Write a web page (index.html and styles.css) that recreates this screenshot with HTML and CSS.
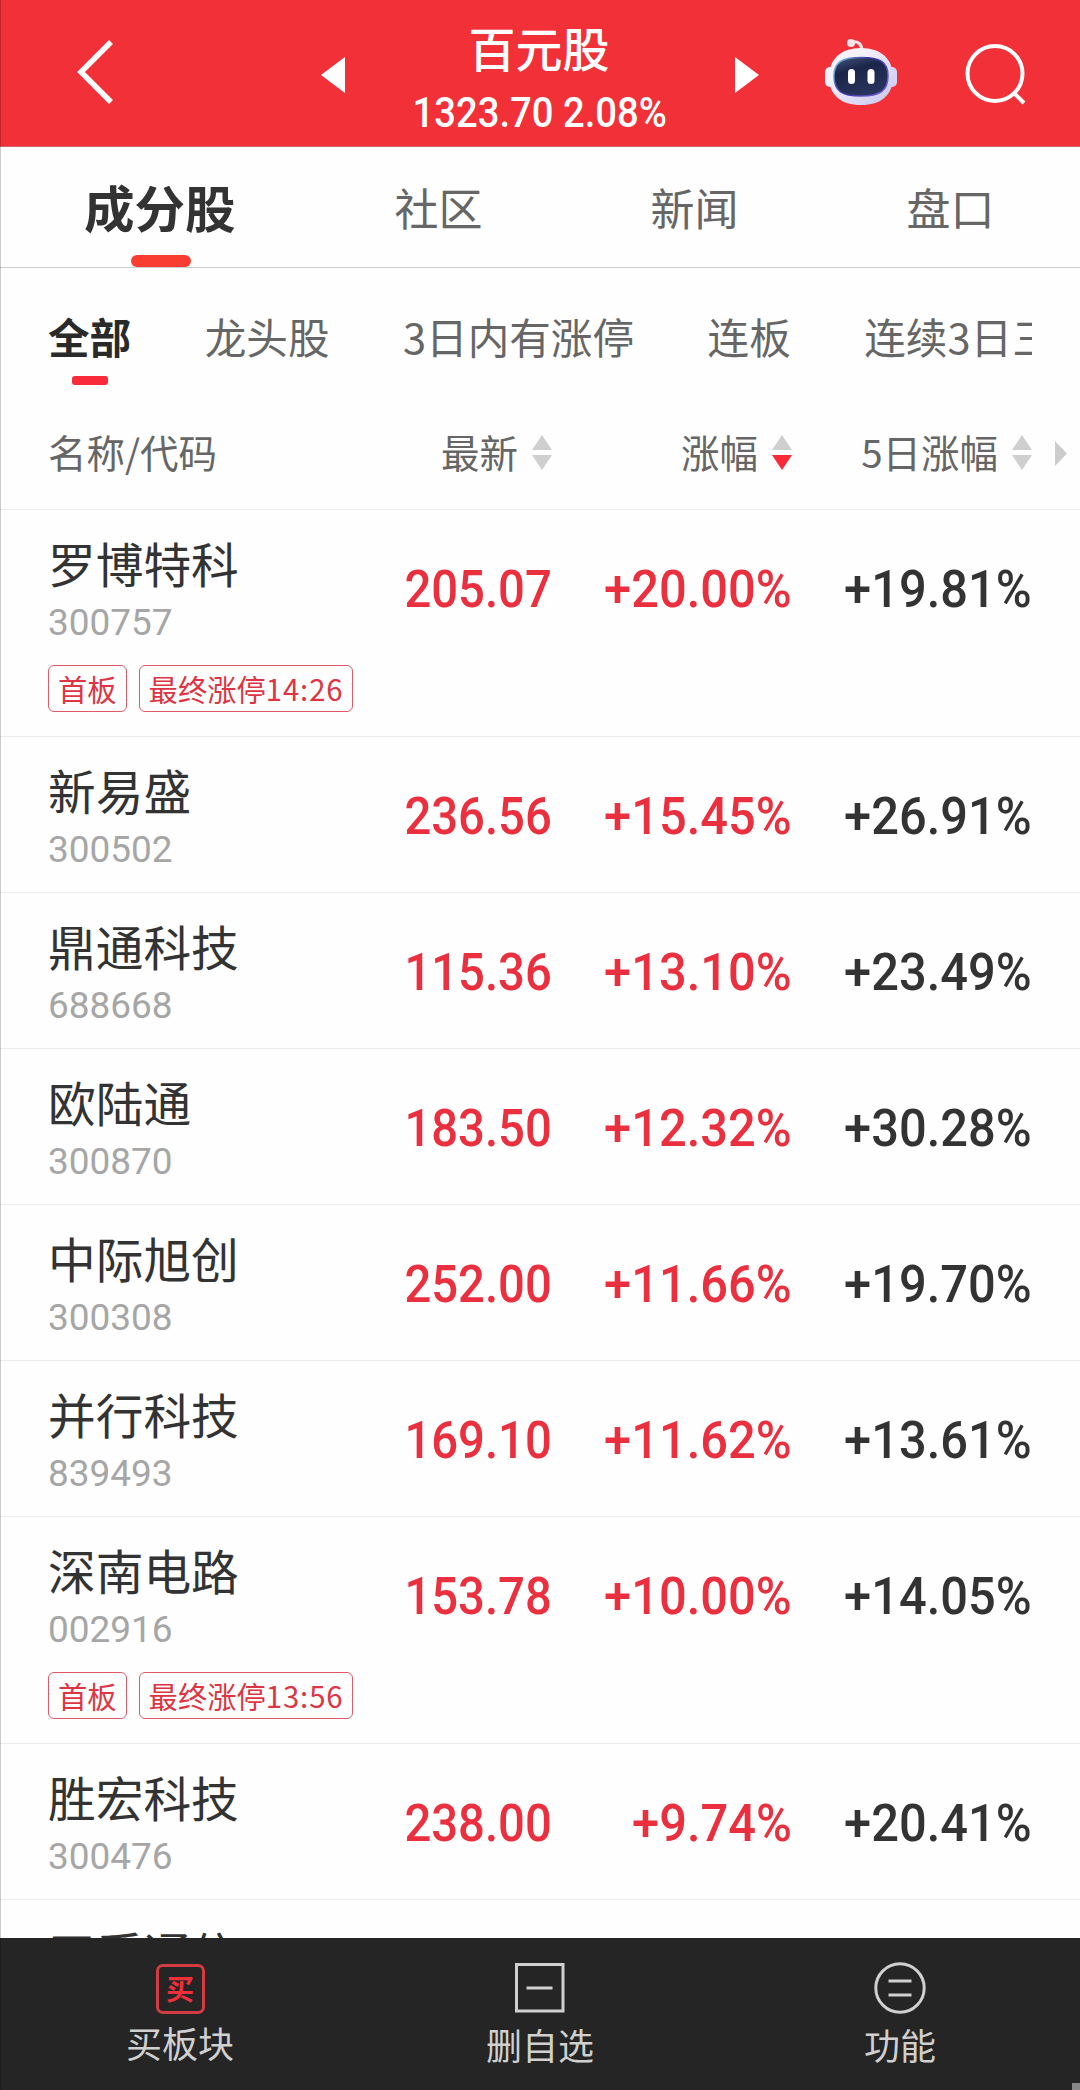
FILE: index.html
```html
<!DOCTYPE html>
<html lang="zh-CN">
<head>
    <meta charset="UTF-8">
    <meta name="viewport" content="width=device-width, initial-scale=1.0">
    <title>百元股</title>
    <link rel="stylesheet" href="styles.css">
</head>
<body>
    <header class="top-bar">
        <svg class="back" width="40" height="68" viewBox="0 0 40 68" fill="none" stroke="#fff" stroke-width="5.5"><path d="M36 4L6 34L36 64"/></svg>
        <svg class="prev" width="24" height="36" viewBox="0 0 24 36" fill="#fff"><path d="M0 18L24 0V36Z"/></svg>
        <div class="heading">
            <h1>百元股</h1>
            <p class="index"><span class="num">1323.70 2.08%</span></p>
        </div>
        <svg class="next" width="24" height="36" viewBox="0 0 24 36" fill="#fff"><path d="M24 18L0 0V36Z"/></svg>
        <svg class="robot" width="72" height="68" viewBox="0 0 72 68">
            <defs>
                <linearGradient id="shell" x1="0" y1="0" x2="1" y2="1">
                    <stop offset="0.3" stop-color="#f7f1f8"/>
                    <stop offset="1" stop-color="#c3c4f0"/>
                </linearGradient>
                <linearGradient id="rim" x1="0" y1="0" x2="1" y2="0.6">
                    <stop offset="0" stop-color="#7fd0e6"/>
                    <stop offset="0.5" stop-color="#3a2fa0"/>
                    <stop offset="1" stop-color="#6b58d0"/>
                </linearGradient>
                <linearGradient id="face" x1="0" y1="0" x2="0.4" y2="1">
                    <stop offset="0" stop-color="#46557a"/>
                    <stop offset="0.4" stop-color="#1a2548"/>
                    <stop offset="1" stop-color="#28335c"/>
                </linearGradient>
            </defs>
            <path d="M27 4C33 3 37 6 37 13" fill="none" stroke="#f8dfe6" stroke-width="3"/>
            <circle cx="26" cy="5" r="4" fill="#fbe3ea"/>
            <rect x="0" y="29" width="10" height="20" rx="5" fill="#f1f0fd"/>
            <rect x="62" y="29" width="10" height="20" rx="5" fill="#d3d3f5"/>
            <path d="M36 10C56 10 68 21 68 39C68 57 56 67 36 67C16 67 4 57 4 39C4 21 16 10 36 10Z" fill="url(#shell)"/>
            <path d="M36 19.500C55 19.500 63 24 63 38C63 53 55 58 36 58C17 58 9 53 9 38C9 24 17 19.500 36 19.500Z" fill="url(#face)" stroke="url(#rim)" stroke-width="1.500"/>
            <rect x="23" y="31" width="7" height="15" rx="3.500" fill="#fff"/>
            <rect x="42.500" y="31" width="7" height="15" rx="3.500" fill="#fff"/>
        </svg>
        <svg class="search" width="62" height="62" viewBox="0 0 62 62" fill="none" stroke="#fff" stroke-width="4"><circle cx="30" cy="30.500" r="27.500"/><path d="M49 50L59 60"/></svg>
    </header>

    <nav class="tabs">
        <span class="tab active">成分股</span>
        <span class="tab">社区</span>
        <span class="tab">新闻</span>
        <span class="tab">盘口</span>
    </nav>

    <div class="filters">
        <span class="filter active">全部</span>
        <span class="filter">龙头股</span>
        <span class="filter">3日内有涨停</span>
        <span class="filter">连板</span>
        <span class="filter">连续3日三</span>
    </div>

    <div class="columns">
        <span>名称/代码</span>
        <span class="sort">最新<i class="arrows"></i></span>
        <span class="sort">涨幅<i class="arrows down"></i></span>
        <span class="sort">5日涨幅<i class="arrows"></i></span>
        <i class="more"></i>
    </div>

    <main class="list">
        <div class="row">
            <div class="stock">
                <p class="name">罗博特科</p>
                <p class="code">300757</p>
                <div class="tags"><span class="tag">首板</span><span class="tag">最终涨停<b>14:26</b></span></div>
            </div>
            <span class="val red"><span class="num">205.07</span></span>
            <span class="val pct red"><span class="num">+20.00%</span></span>
            <span class="val pct"><span class="num">+19.81%</span></span>
        </div>
        <div class="row">
            <div class="stock">
                <p class="name">新易盛</p>
                <p class="code">300502</p>
            </div>
            <span class="val red"><span class="num">236.56</span></span>
            <span class="val pct red"><span class="num">+15.45%</span></span>
            <span class="val pct"><span class="num">+26.91%</span></span>
        </div>
        <div class="row">
            <div class="stock">
                <p class="name">鼎通科技</p>
                <p class="code">688668</p>
            </div>
            <span class="val red"><span class="num">115.36</span></span>
            <span class="val pct red"><span class="num">+13.10%</span></span>
            <span class="val pct"><span class="num">+23.49%</span></span>
        </div>
        <div class="row">
            <div class="stock">
                <p class="name">欧陆通</p>
                <p class="code">300870</p>
            </div>
            <span class="val red"><span class="num">183.50</span></span>
            <span class="val pct red"><span class="num">+12.32%</span></span>
            <span class="val pct"><span class="num">+30.28%</span></span>
        </div>
        <div class="row">
            <div class="stock">
                <p class="name">中际旭创</p>
                <p class="code">300308</p>
            </div>
            <span class="val red"><span class="num">252.00</span></span>
            <span class="val pct red"><span class="num">+11.66%</span></span>
            <span class="val pct"><span class="num">+19.70%</span></span>
        </div>
        <div class="row">
            <div class="stock">
                <p class="name">并行科技</p>
                <p class="code">839493</p>
            </div>
            <span class="val red"><span class="num">169.10</span></span>
            <span class="val pct red"><span class="num">+11.62%</span></span>
            <span class="val pct"><span class="num">+13.61%</span></span>
        </div>
        <div class="row">
            <div class="stock">
                <p class="name">深南电路</p>
                <p class="code">002916</p>
                <div class="tags"><span class="tag">首板</span><span class="tag">最终涨停<b>13:56</b></span></div>
            </div>
            <span class="val red"><span class="num">153.78</span></span>
            <span class="val pct red"><span class="num">+10.00%</span></span>
            <span class="val pct"><span class="num">+14.05%</span></span>
        </div>
        <div class="row">
            <div class="stock">
                <p class="name">胜宏科技</p>
                <p class="code">300476</p>
            </div>
            <span class="val red"><span class="num">238.00</span></span>
            <span class="val pct red"><span class="num">+9.74%</span></span>
            <span class="val pct"><span class="num">+20.41%</span></span>
        </div>
        <div class="row">
            <div class="stock">
                <p class="name">天孚通信</p>
            </div>
        </div>
    </main>

    <footer class="bottom-bar">
        <div class="action">
            <span class="buy-icon">买</span>
            <span class="label">买板块</span>
        </div>
        <div class="action">
            <svg width="52" height="52" viewBox="0 0 52 52" fill="none" stroke="#d0d0d0" stroke-width="3"><rect x="2.500" y="2.500" width="46.500" height="46.500"/><path d="M12.500 26H38.500"/></svg>
            <span class="label low">删自选</span>
        </div>
        <div class="action">
            <svg width="52" height="52" viewBox="0 0 52 52" fill="none" stroke="#d0d0d0" stroke-width="3"><circle cx="26" cy="26" r="24.200"/><path d="M14.500 19H37.500M14.500 33H37.500"/></svg>
            <span class="label low">功能</span>
        </div>
        <i class="corner"></i>
    </footer>
</body>
</html>
```
FILE: styles.css
```css
* {
    box-sizing: border-box;
}
body {
    margin: 0;
    width: 1080px;
    height: 2090px;
    overflow: hidden;
    display: flex;
    flex-direction: column;
    position: relative;
    background: #fefefe;
    color: #333;
    font-family: "Noto Sans CJK SC", sans-serif;
}
/* thin edge down the left side */
body::after {
    content: "";
    position: absolute;
    left: 0;
    top: 0;
    width: 1px;
    height: 100%;
    background: rgba(0, 0, 0, 0.2);
}
h1, p {
    margin: 0;
}
i {
    display: block;
}
.num {
    display: inline-block;
    font-family: Roboto, sans-serif;
    font-weight: 500;
    transform: scaleX(0.9);
}

/* top bar */
.top-bar {
    flex: none;
    height: 147px;
    background: #f13038;
    border-bottom: 1px solid #c9676b;
    color: #fff;
    display: flex;
    align-items: flex-start;
}
.top-bar svg {
    flex: none;
}
.back {
    margin: 38px 0 0 75px;
}
.prev {
    margin: 57px 0 0 206px;
}
.heading {
    width: 390px;
    text-align: center;
    padding-top: 14px;
}
.heading h1 {
    font-size: 47px;
    line-height: 66px;
    font-weight: 500;
    margin-left: -2px;
}
.index {
    font-size: 42px;
    line-height: 50px;
    margin-top: 4px;
}
.index .num {
    transform: scaleX(0.91);
}
.next {
    margin-top: 57px;
}
.robot {
    margin: 38px 0 0 66px;
}
.search {
    margin: 43px 0 0 68px;
}

/* tabs */
.tabs {
    flex: none;
    height: 121px;
    border-bottom: 1px solid #ccc;
    padding-left: 84px;
    display: flex;
    gap: 168px;
}
.tab {
    font-size: 44px;
    line-height: 120px;
    color: #666;
}
.tab.active {
    position: relative;
    font-size: 50.5px;
    font-weight: 700;
    line-height: 119px;
    color: #333;
    margin-right: -9px;
}
.tab.active::after {
    content: "";
    position: absolute;
    left: 47px;
    bottom: 0;
    width: 60px;
    height: 12px;
    border-radius: 6px;
    background: #f93d31;
}

/* filters */
.filters {
    flex: none;
    height: 142px;
    margin-left: 48px;
    width: 984px;
    overflow: hidden;
    display: flex;
    gap: 73.5px;
    white-space: nowrap;
}
.filter {
    flex: none;
    font-size: 41.6px;
    line-height: 137px;
    color: #666;
}
.filter.active {
    position: relative;
    font-weight: 700;
    color: #2a2a2a;
}
.filter.active::after {
    content: "";
    position: absolute;
    left: 24px;
    top: 108px;
    width: 36px;
    height: 9px;
    border-radius: 3px;
    background: #f92a3a;
}

/* column headings */
.columns {
    flex: none;
    height: 100px;
    padding-left: 48px;
    border-bottom: 1px solid #ededed;
    display: grid;
    grid-template-columns: 264px 240px 240px 240px auto;
    font-size: 38.5px;
    line-height: 83px;
    color: #666;
}
.sort {
    display: flex;
    justify-content: flex-end;
}
.arrows {
    margin: 25px 0 0 14px;
    width: 20px;
}
.arrows::before,
.arrows::after {
    content: "";
    display: block;
    width: 20px;
    height: 15px;
    background: #cfcfcf;
    clip-path: polygon(50% 0, 100% 100%, 0 100%);
}
.arrows::after {
    margin-top: 5px;
    clip-path: polygon(0 0, 100% 0, 50% 100%);
}
.arrows.down::after {
    background: #f92a3a;
}
.more {
    margin: 31px 0 0 23px;
    width: 12px;
    height: 25px;
    background: #ccc;
    clip-path: polygon(0 0, 100% 50%, 0 100%);
}

/* stock list */
.list {
    flex: 1;
    min-height: 0;
    overflow: hidden;
}
.row {
    min-height: 156px;
    border-bottom: 1px solid #ededed;
    padding-left: 48px;
    display: grid;
    grid-template-columns: 263px 240px 240px 240px;
    align-items: start;
}
.stock {
    white-space: nowrap;
}
.name {
    font-size: 47.7px;
    line-height: 60px;
    padding-top: 23px;
}
.code {
    font-family: Roboto, sans-serif;
    font-size: 37.5px;
    line-height: 44px;
    margin-top: 7px;
    color: #a6a6a6;
    transform: scaleX(0.985);
    transform-origin: left center;
}
.tags {
    display: flex;
    gap: 12px;
    margin: 21px 0 24px;
}
.tag {
    height: 47px;
    border: 1.5px solid #dd5a64;
    border-radius: 6px;
    padding: 0 9px;
    font-size: 29.3px;
    line-height: 45px;
    color: #dd3543;
}
.tag b {
    font-weight: 400;
    letter-spacing: 0.9px;
}
.val {
    padding: 44px 0 0;
    margin-right: -1px;
    text-align: right;
    font-size: 52.5px;
    line-height: 60px;
}
.val .num {
    transform-origin: right center;
}
.pct .num {
    transform: scaleX(0.93);
}
.red {
    color: #ea2f3e;
}

/* bottom bar */
.bottom-bar {
    flex: none;
    position: relative;
    height: 152px;
    background: #252525;
    color: #d0d0d0;
    display: flex;
}
.action {
    flex: 1;
    display: flex;
    flex-direction: column;
    align-items: center;
    padding-top: 24px;
}
.buy-icon {
    width: 49px;
    height: 50px;
    margin: 2px 0 0;
    border: 3px solid #d23c42;
    border-radius: 7px;
    color: #f02f3c;
    font-size: 28px;
    font-weight: 700;
    line-height: 42px;
    text-align: center;
}
.label {
    font-size: 36px;
    line-height: 50px;
    margin-top: 3px;
}
.label.low {
    margin-top: 5px;
}
.corner {
    position: absolute;
    right: 0;
    bottom: 0;
    width: 8px;
    height: 7px;
    background: #888;
}
```
